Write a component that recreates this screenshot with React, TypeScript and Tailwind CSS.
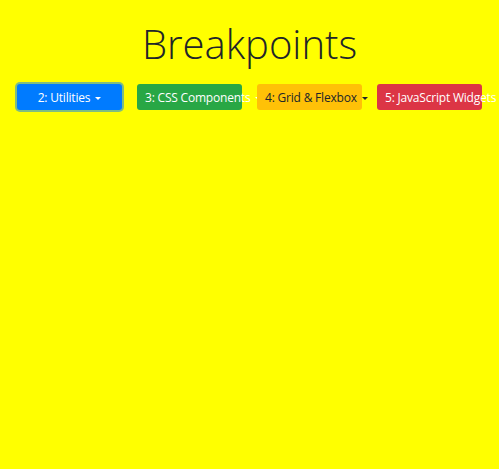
import React from 'react';

const BUTTONS = [
  { label: '2: Utilities', cls: 'bg-[#007bff] text-white shadow-[0_0_0_2px_rgba(0,123,255,0.5)]' },
  { label: '3: CSS Components', cls: 'bg-[#28a745] text-white' },
  { label: '4: Grid & Flexbox', cls: 'bg-[#ffc107] text-[#212529]' },
  { label: '5: JavaScript Widgets', cls: 'bg-[#dc3545] text-white' },
];

function Caret() {
  return (
    <span className="inline-block align-[2px] ml-[5px] w-0 h-0 border-t-[3.5px] border-t-current border-x-[3.5px] border-x-transparent" />
  );
}

export default function App() {
  return (
    <div className="min-h-[469px] w-full bg-[#ffff00] font-['Open_Sans',sans-serif] text-[#212529]">
      <h1 className="pt-[20px] text-center text-[40px] font-light leading-[48px]">Breakpoints</h1>

      {/* Chapter dropdowns */}
      <div className="mt-[16px] flex justify-center gap-[15px]">
        {BUTTONS.map((b) => (
          <button
            key={b.label}
            className={`w-[105px] h-[26px] shrink-0 rounded-[3px] px-2 text-center text-[12px] tracking-[-0.2px] leading-[27px] whitespace-nowrap overflow-visible ${b.cls}`}
          >
            {b.label}
            <Caret />
          </button>
        ))}
      </div>
    </div>
  );
}
